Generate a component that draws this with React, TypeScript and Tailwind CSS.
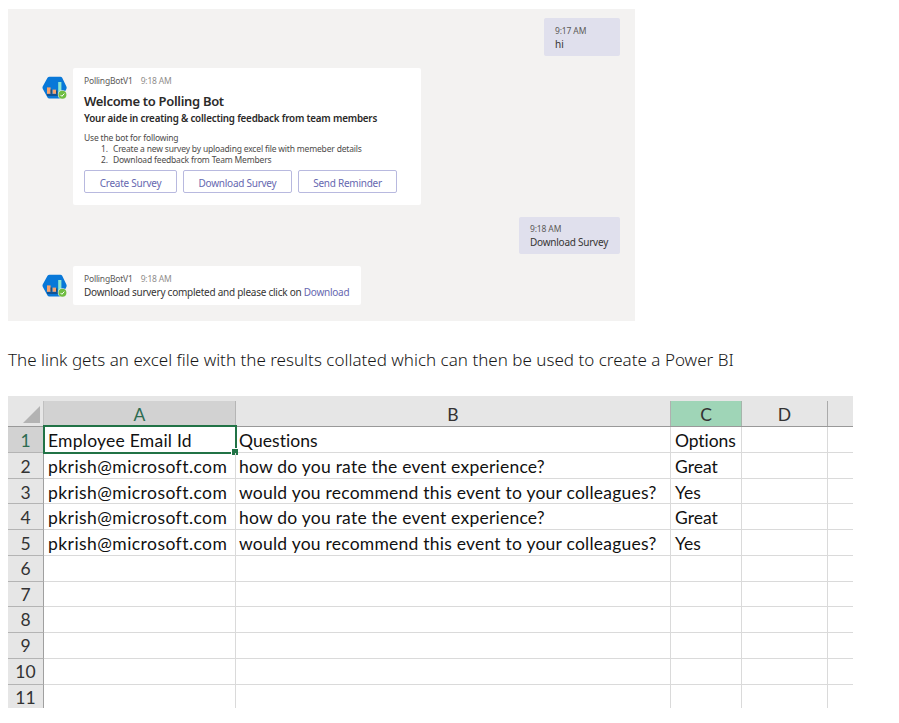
import type { ReactNode } from "react";

function BotAvatar() {
  return (
    <svg className="ml-[34px] mt-[8px] h-[26px] w-[26px] shrink-0" viewBox="0 0 26 26">
      <path d="M7.6 0.8h10.8q1.2 0 1.8 1l4.2 8.8q.6 1.2 0 2.3l-4.6 8.4q-.7 1.2-1.9 1.2H7.3q-1.2 0-1.8-1L.7 12.8q-.5-1.1 0-2.2l4.8-8.8q.7-1 2.1-1z" fill="#0878d8" />
      <rect x="5" y="11.4" width="3.6" height="6.4" fill="#f8a36d" />
      <rect x="10.6" y="13.6" width="3.4" height="4.2" fill="#f8a36d" />
      <path d="M8.6 13.5h1.2v4.3h-1.2zM14 14.5h1.2v3.3h-1.2z" fill="#284b66" />
      <rect x="16.2" y="6" width="3.2" height="12" fill="#8de6d2" />
      <rect x="5" y="18.4" width="12" height="1.2" fill="#173c68" />
      <circle cx="20.4" cy="18.8" r="4.6" fill="#f3f2f1" />
      <circle cx="20.4" cy="18.8" r="4" fill="#6fbd42" />
      <path d="M18.5 18.9l1.4 1.4 2.4-2.7" fill="none" stroke="#fff" strokeWidth="1" />
    </svg>
  );
}

function Sender() {
  return (
    <div className="flex h-3 items-center gap-2 text-[8.5px] leading-3 tracking-[-0.2px] text-[#5c5a58]">
      <span>PollingBotV1</span>
      <span className="text-[#8f8d8b]">9:18 AM</span>
    </div>
  );
}

function CardButton({ className, children }: { className: string; children: ReactNode }) {
  return (
    <button className={`h-[23px] rounded-[2px] border-[1.5px] border-[#b8b9df] bg-white pt-[2px] text-[10px] leading-[18px] tracking-[-0.25px] text-[#6668b0] ${className}`}>
      {children}
    </button>
  );
}

function Chat() {
  return (
    <section className="h-[312px] w-[627px] bg-[#f3f2f1] pt-[9px] text-[#363534]">
      <div className="ml-[536px] h-[38px] w-[76px] rounded-[2px] bg-[#e0e0ed] pl-[11px] pt-[7px]">
        <div className="text-[8.5px] leading-3 tracking-[-0.14px] text-[#5c5a58]">9:17 AM</div>
        <div className="text-[10px] leading-[14px]">hi</div>
      </div>

      <div className="mt-[12px] flex h-[137px]">
        <BotAvatar />
        <div className="ml-[5px] w-[348px] rounded-[2px] bg-white pl-[11px] pt-[7px]">
          <Sender />
          <h1 className="mt-[5px] text-[13px] font-semibold leading-[18px] tracking-[-0.32px] text-[#2b2a29]">Welcome to Polling Bot</h1>
          <p className="mt-[2px] text-[9.8px] font-semibold leading-[14px] tracking-[-0.19px] text-[#2b2a29]">
            Your aide in creating &amp; collecting feedback from team members
          </p>
          <div className="mt-[7px] text-[8.5px] leading-[10.8px] tracking-[-0.18px] text-[#4d4b4a]">
            <p>Use the bot for following</p>
            <ol className="pl-[17px]">
              <li className="flex"><span className="w-[12px]">1.</span>Create a new survey by uploading excel file with memeber details</li>
              <li className="flex"><span className="w-[12px]">2.</span>Download feedback from Team Members</li>
            </ol>
          </div>
          <div className="mt-[5px] flex gap-[6px]">
            <CardButton className="w-[93px]">Create Survey</CardButton>
            <CardButton className="w-[109px]">Download Survey</CardButton>
            <CardButton className="w-[99px]">Send Reminder</CardButton>
          </div>
        </div>
      </div>

      <div className="ml-[511px] mt-[12px] h-[37px] w-[101px] rounded-[2px] bg-[#e0e0ed] pl-[11px] pt-[6px]">
        <div className="text-[8.5px] leading-3 tracking-[-0.14px] text-[#5c5a58]">9:18 AM</div>
        <div className="text-[10px] leading-[14px] tracking-[-0.24px]">Download Survey</div>
      </div>

      <div className="mt-[12px] flex h-[39px]">
        <BotAvatar />
        <div className="ml-[5px] w-[288px] rounded-[2px] bg-white pl-[11px] pt-[7px]">
          <Sender />
          <p className="whitespace-nowrap text-[10px] leading-[14px] tracking-[-0.25px]">
            Download survery completed and please click on <span className="text-[#6668b0]">Download</span>
          </p>
        </div>
      </div>
    </section>
  );
}

const cols = "grid grid-cols-[36px_192px_435px_71px_86px_25px] grid-rows-[100%]";
const how = "how do you rate the event experience?";
const would = "would you recommend this event to your colleagues?";
const mail = "pkrish@microsoft.com";

const rows: { h: string; cells: string[] }[] = [
  { h: "h-[26px]", cells: ["Employee Email Id", "Questions", "Options"] },
  { h: "h-[26px]", cells: [mail, how, "Great"] },
  { h: "h-[25px]", cells: [mail, would, "Yes"] },
  { h: "h-[26px]", cells: [mail, how, "Great"] },
  { h: "h-[26px]", cells: [mail, would, "Yes"] },
  { h: "h-[26px]", cells: [] },
  { h: "h-[25px]", cells: [] },
  { h: "h-[26px]", cells: [] },
  { h: "h-[26px]", cells: [] },
  { h: "h-[26px]", cells: [] },
  { h: "h-[24px]", cells: [] },
];

function Sheet() {
  return (
    <section className="mt-[25px] h-[312px] w-[845px] overflow-hidden font-[Lato,Carlito,sans-serif] text-[17.5px] text-[#111]">
      <div className={`${cols} h-[31px] border-b border-[#999] bg-[#e6e6e6] pt-[5px] text-center leading-[28px] text-[#333]`}>
        <div className="flex justify-end border-r border-[#c0c0c0] pr-[3px]">
          <svg className="mt-[5px] h-[17px] w-[17px]" viewBox="0 0 17 17"><path d="M17 0v17H0z" fill="#b3b3b3" /></svg>
        </div>
        <div className="border-r border-[#b5b5b5] bg-[#d2d2d2] text-[#2d6b50]">A</div>
        <div className="border-r border-[#b0b0b0]">B</div>
        <div className="border-r border-[#a5b5ab] bg-[#9fd5b7]">C</div>
        <div className="border-r border-[#aaa]">D</div>
        <div />
      </div>
      {rows.map(({ h, cells }, i) => {
        const last = i === rows.length - 1;
        const line = last ? "" : "border-b border-b-[#dadada]";
        return (
          <div key={i} className={`${cols} ${h} leading-[28px]`}>
            <div className={`border-r border-r-[#a0a0a0] text-center ${last ? "" : "border-b border-b-[#b4b4b4]"} ${i === 0 ? "bg-[#d2d2d2] text-[#2d6b50]" : "bg-[#e6e6e6] text-[#333]"} ${i > 4 ? "leading-[26px]" : ""}`}>{i + 1}</div>
            <div className={`relative whitespace-nowrap border-r border-r-[#dadada] pl-[4px] ${i === 0 ? "tracking-[0.24px]" : "tracking-[0.44px]"} ${line}`}>
              {cells[0]}
              {i === 0 && (
                <>
                  <div className="absolute -left-px -top-[2px] h-[29px] w-[194px] border-2 border-[#217346]" />
                  <div className="absolute -right-[3px] top-[21px] h-[7px] w-[7px] border-l border-t border-white bg-[#217346]" />
                </>
              )}
            </div>
            <div className={`whitespace-nowrap border-r border-r-[#dadada] pl-[3px] ${i === 0 ? "tracking-[0.05px]" : "tracking-[0.23px]"} ${line}`}>{cells[1]}</div>
            <div className={`border-r border-r-[#dadada] pl-[4px] ${i === 0 ? "tracking-[-0.08px]" : ""} ${line}`}>{cells[2]}</div>
            <div className={`border-r border-r-[#dadada] ${line}`} />
            <div className={line} />
          </div>
        );
      })}
    </section>
  );
}

export default function App() {
  return (
    <main className="h-[723px] w-[899px] overflow-hidden bg-white pl-2 pt-[9px] font-['Noto_Sans','Open_Sans',sans-serif]">
      <Chat />
      <p className="mt-[27px] h-[23px] whitespace-nowrap text-[17px] font-light leading-[24px] tracking-[0.01px] text-[#171717]">
        The link gets an excel file with the results collated which can then be used to create a Power BI
      </p>
      <Sheet />
    </main>
  );
}
